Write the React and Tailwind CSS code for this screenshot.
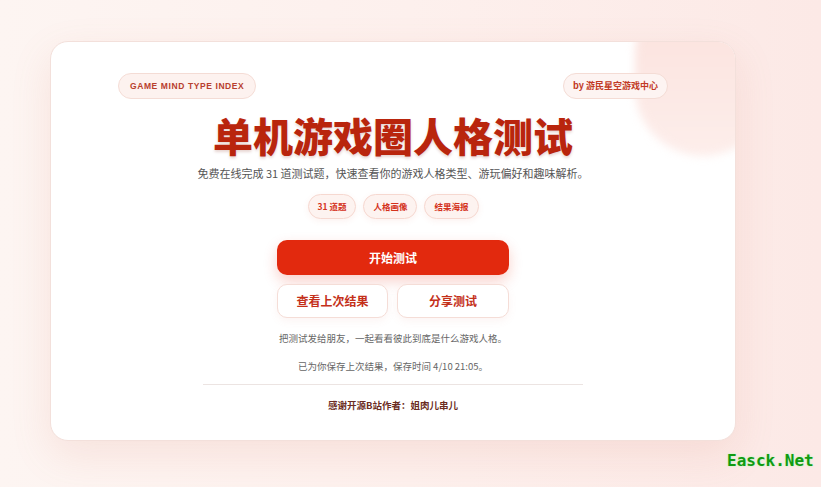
import React from "react";

const cjk = "font-['Noto_Sans_CJK_SC','Noto_Sans',sans-serif]";

function Chip({ children }) {
  return (
    <span className="rounded-full border border-[#f6d8d0] bg-[#fdf3f0] px-[9px] py-[5px] text-[8.5px] leading-[13px] font-bold text-[#d4321c] shadow-[0_2px_6px_rgba(220,90,60,0.08)]">
      {children}
    </span>
  );
}

export default function App() {
  return (
    <div className={`relative min-h-[487px] w-full bg-gradient-to-r from-[#fdf5f2] via-[#fdf0ed] to-[#fce9e6] pl-[50px] pt-[41px] ${cjk}`}>
      <div className="relative h-[400px] w-[686px] overflow-hidden rounded-[18px] border border-[#f3e0db] bg-white shadow-[0_14px_40px_rgba(214,120,100,0.14)]">
        {/* corner decoration */}
        <div className="absolute -right-[36px] -top-[56px] h-[170px] w-[136px] rounded-full bg-gradient-to-b from-[#fbe0db] to-[#fdeeeb] blur-[4px]" />

        <div className="relative flex items-center justify-between px-[67px] pt-[31px]">
          <span className="rounded-full border border-[#f4dcd5] bg-[#fdf2ef] px-[11px] py-[6px] font-['Liberation_Sans',sans-serif] text-[8.5px] leading-[12px] font-bold tracking-[0.07em] text-[#b8402e]">
            GAME MIND TYPE INDEX
          </span>
          <span className="rounded-full border border-[#f4dcd5] bg-[#fdf4f2] px-[9px] py-[5px] text-[9px] leading-[14px] font-bold text-[#c23a25]">
            by 游民星空游戏中心
          </span>
        </div>

        <div className="relative flex flex-col items-center">
          <h1 className="mt-[13px] text-[40px] leading-[46px] font-black text-[#b9250d] [text-shadow:0_2px_3px_rgba(120,20,5,0.18)]">
            单机游戏圈人格测试
          </h1>
          <p className="mt-[7px] text-[11px] leading-[16px] text-[#555]">
            免费在线完成 31 道测试题，快速查看你的游戏人格类型、游玩偏好和趣味解析。
          </p>

          <div className="mt-[13px] flex gap-[7px]">
            <Chip>31 道题</Chip>
            <Chip>人格画像</Chip>
            <Chip>结果海报</Chip>
          </div>

          <button className="mt-[21px] h-[35px] w-[232px] rounded-[10px] bg-[#e2290e] text-[12px] font-bold text-white shadow-[0_6px_14px_rgba(226,41,14,0.22)]">
            开始测试
          </button>

          <div className="mt-[9px] flex gap-[9px]">
            <button className="h-[34px] w-[111px] rounded-[10px] border border-[#f5ddd7] bg-white text-[12px] font-bold text-[#c4301a] shadow-[0_3px_8px_rgba(214,120,100,0.08)]">
              查看上次结果
            </button>
            <button className="h-[34px] w-[112px] rounded-[10px] border border-[#f5ddd7] bg-white text-[12px] font-bold text-[#c4301a] shadow-[0_3px_8px_rgba(214,120,100,0.08)]">
              分享测试
            </button>
          </div>

          <p className="mt-[13px] text-[9.5px] leading-[14px] text-[#666]">
            把测试发给朋友，一起看看彼此到底是什么游戏人格。
          </p>
          <p className="mt-[14px] text-[9.5px] leading-[14px] text-[#666]">
            已为你保存上次结果，保存时间 4/10 21:05。
          </p>

          <div className="mt-[11px] h-px w-[380px] bg-[#ece4e2]" />

          <p className="mt-[13px] text-[9.5px] leading-[14px] font-bold text-[#6b2c22]">
            感谢开源B站作者：姐肉儿串儿
          </p>
        </div>
      </div>

      <span className="absolute left-[727px] top-[449px] font-['DejaVu_Sans_Mono',monospace] text-[16px] font-bold text-[#119a11] [text-shadow:0_0_2px_#c8f5c8,0_0_2px_#c8f5c8]">
        Easck.Net
      </span>
    </div>
  );
}
